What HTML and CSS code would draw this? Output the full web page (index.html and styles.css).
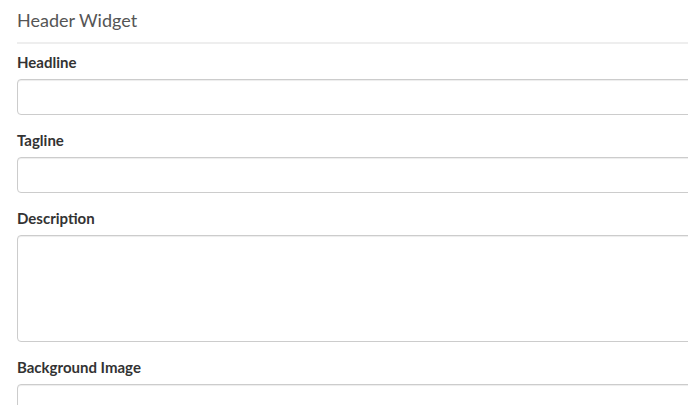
FILE: index.html
```html
<!DOCTYPE html>
<html>
<head>
  <meta charset="UTF-8">
  <title>Header Widget</title>
  <link rel="stylesheet" href="styles.css">
</head>
<body>
  <div class="panel">
    <h3 class="panel-title">Header Widget</h3>
    <form class="widget-form">
      <div class="form-group">
        <label for="headline">Headline</label>
        <input type="text" id="headline" class="form-control">
      </div>
      <div class="form-group">
        <label for="tagline">Tagline</label>
        <input type="text" id="tagline" class="form-control">
      </div>
      <div class="form-group">
        <label for="description">Description</label>
        <textarea id="description" class="form-control textarea"></textarea>
      </div>
      <div class="form-group">
        <label for="bgimage">Background Image</label>
        <input type="text" id="bgimage" class="form-control">
      </div>
    </form>
  </div>
</body>
</html>
```

FILE: styles.css
```css
body {
  font-family: Lato, 'Open Sans', sans-serif;
  margin: 0;
  background-color: white;
  color: #333;
  overflow: hidden;
}
.panel {
  padding: 0 0 0 17px;
  width: 720px;
}
.panel-title {
  font-size: 18px;
  font-weight: normal;
  color: #555;
  margin: 0;
  padding: 9px 0 10px;
  line-height: 23px;
  border-bottom: 2px solid #eee;
}
.widget-form {
  padding-top: 8px;
}
.form-group {
  margin-bottom: 15px;
}
label {
  display: block;
  font-size: 15px;
  font-weight: bold;
  line-height: 20px;
  margin-bottom: 7px;
}
.form-control {
  display: block;
  box-sizing: border-box;
  width: 100%;
  height: 36px;
  border: 1px solid #ccc;
  border-radius: 4px;
  box-shadow: inset 0 1px 1px rgba(0,0,0,0.075);
  font-family: inherit;
  font-size: 14px;
  padding: 6px 12px;
}
.textarea {
  height: 107px;
  resize: none;
}
```
